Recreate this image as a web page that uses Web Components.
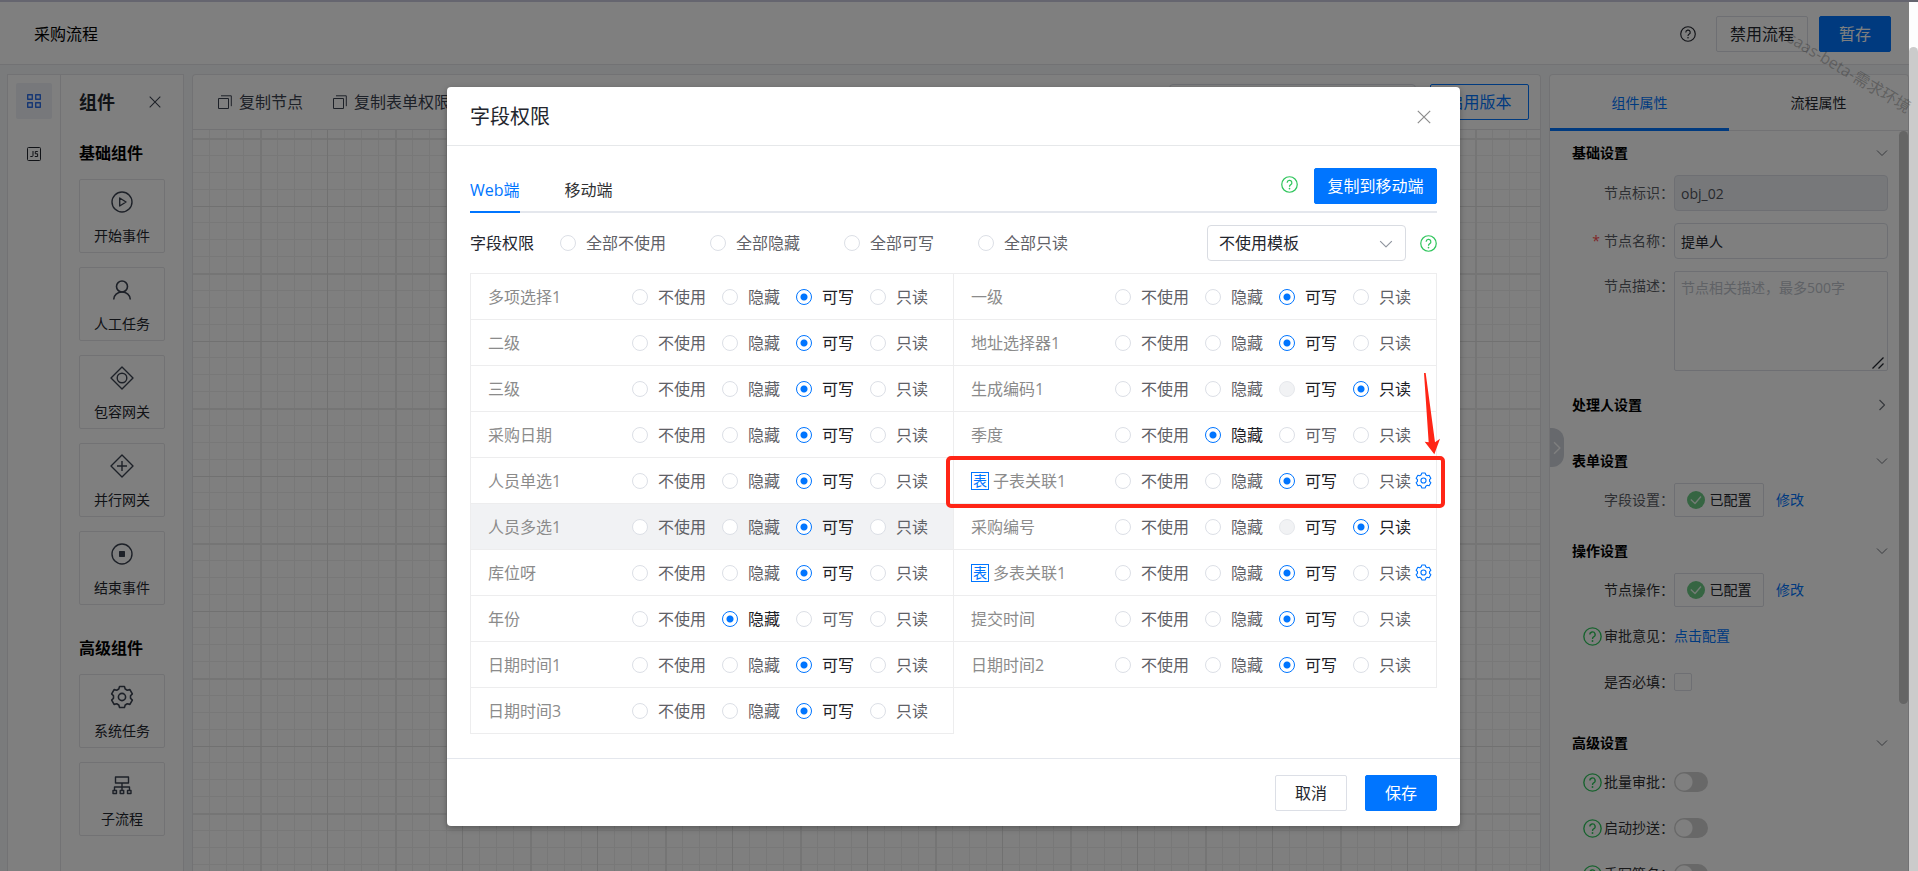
<!DOCTYPE html>
<html lang="zh-CN">
<head>
<meta charset="utf-8">
<meta name="viewport" content="width=device-width, initial-scale=1">
<title>采购流程</title>
<style>
  html, body { height: 100%; }
  body {
    margin: 0;
    overflow: hidden;
    font-family: "Open Sans", "Noto Sans CJK SC", sans-serif;
    font-size: 16px;
    line-height: 24px;
    color: #23262e;
    --blue: #0075ff;
    --line: #e4e5e8;
    --green: #2fc55c;
  }
</style>
</head>
<body>
<flow-app></flow-app>
<script>
const define = (name, html, setup) => {
  const template = document.createElement('template');
  template.innerHTML = '<style>*{box-sizing:border-box}button,input,select,textarea{font:inherit;color:inherit;margin:0}</style>' + html;
  customElements.define(name, class extends HTMLElement {
    constructor() {
      super();
      this.attachShadow({ mode: 'open' }).append(template.content.cloneNode(true));
    }
    connectedCallback() {
      if (setup && !this.ready) { this.ready = true; setup(this, this.shadowRoot); }
    }
  });
};

/* Six-toothed gear outline, first tooth pointing up */
const gearOutline = () => {
  const points = [];
  for (let k = 0; k < 6; k++) {
    for (const [turn, radius] of [[-22, 8.6], [-13, 10.8], [13, 10.8], [22, 8.6]]) {
      const a = (k * 60 - 90 + turn) * Math.PI / 180;
      points.push((12 + radius * Math.cos(a)).toFixed(2) + ' ' + (12 + radius * Math.sin(a)).toFixed(2));
    }
  }
  return `<path d="M${points.join('L')}z"/><circle cx="12" cy="12" r="3.6"/>`;
};

/* name: [viewBox size, stroke width, markup] */
const ICONS = {
  grid: [14, 1.4, '<path d="M.7.7h4.6v4.600H.7zM8.700.7h4.600v4.600H8.700zM.7 8.700h4.600v4.600H.7zM8.700 8.700h4.600v4.600H8.700z"/>'],
  js: [14, 1, '<rect x=".5" y=".5" width="13" height="13" rx="1"/><path d="M6 4v4.500q0 1-1 1H3.300M10.800 4.500H8.300v2.300h2.300v2.700H7.800"/>'],
  close: [14, 1.2, '<path d="M.8.8l12.400 12.400M13.200.8L.8 13.200"/>'],
  play: [24, 1.4, '<circle cx="12" cy="12" r="10"/><path d="M9.700 8v8l6.300-4z"/>'],
  user: [24, 1.6, '<circle cx="12" cy="8.500" r="5.500"/><path d="M3.700 21.500c0-4.500 3.800-7.500 8.300-7.500s8.300 3 8.300 7.500"/>'],
  inclusive: [24, 1.4, '<path d="M12 1l11 11-11 11L1 12z"/><circle cx="12" cy="12" r="4.800"/>'],
  parallel: [24, 1.4, '<path d="M12 1l11 11-11 11L1 12zM12 7v10M7 12h10"/>'],
  stop: [24, 1.4, '<circle cx="12" cy="12" r="10"/><rect x="9.700" y="9.700" width="4.600" height="4.600" fill="currentColor"/>'],
  gear: [24, 1.6, gearOutline()],
  tree: [24, 1.4, '<path d="M5.500 4h13v6h-13zM12 10v7M4.500 17v-3h15v3M3 17.500h3.500V20.500H3zM10.200 17.500h3.500V20.500h-3.500zM17.500 17.500H21V20.500h-3.500z"/>'],
  copy: [14, 1, '<path d="M.5 3.500h10v10H.5zM3 .8h10.300v10.400"/>'],
  help: [18, 1.3, '<circle cx="9" cy="9" r="8.200"/><path d="M6.500 7.200a2.500 2.500 0 1 1 3.600 2.200q-1.100.6-1.100 1.900"/><circle cx="9" cy="13.300" r=".9" fill="currentColor" stroke="none"/>'],
  down: [12, 1, '<path d="M1 3.500l5 5 5-5"/>'],
  right: [12, 1.2, '<path d="M3.500 1l5 5-5 5"/>'],
  ok: [18, 1.3, '<circle cx="9" cy="9" r="9" fill="#6ccb85" stroke="none"/><path d="M3.800 8.500l4.200 4 6-7" stroke="#e8f7ec"/>'],
  grip: [12, 1.3, '<path d="M.5 11.500l11-11M6.500 11.500l5-5"/>']
};
define('ui-icon', `<style>
  :host{display:block;width:14px;height:14px;flex:none}
  svg{display:block;width:100%;height:100%;overflow:visible}
</style>`, (el, root) => {
  const [size, width, body] = ICONS[el.getAttribute('name')];
  root.lastElementChild.insertAdjacentHTML('afterend',
    `<svg viewBox="0 0 ${size} ${size}" fill="none" stroke="currentColor" stroke-width="${width}" stroke-linejoin="round" aria-hidden="true">${body}</svg>`);
});

define('ui-button', `<style>
  :host{display:block;flex:none;height:36px}
  button{display:flex;align-items:center;justify-content:center;gap:5px;width:100%;height:100%;padding:0;border:1px solid #dcdfe6;border-radius:2px;background:transparent;white-space:nowrap;cursor:pointer}
  :host([kind=primary]) button{background:var(--blue);border-color:var(--blue);color:#fff}
  :host([kind=outline]) button{border-color:var(--blue);color:var(--blue)}
</style><button type="button"><slot></slot></button>`);

/* Top bar */
define('app-header', `<style>
  :host{display:flex;align-items:center;height:63px;padding:2px 18px 0 34px;background:#fff;border-bottom:1px solid var(--line);box-sizing:border-box}
  h1{flex:1;margin:0;font-size:16px;font-weight:400;color:#000}
  ui-icon{width:16px;height:16px;margin-right:20px}
  .disable{width:92px;margin-right:11px}
  .save{width:72px}
</style>
<h1>采购流程</h1><ui-icon name="help"></ui-icon>
<ui-button class="disable">禁用流程</ui-button><ui-button class="save" kind="primary">暂存</ui-button>`);

/* Narrow icon bar */
define('icon-rail', `<style>
  :host{display:flex;flex-direction:column;align-items:center;gap:17px;width:54px;padding-top:8px;background:#fff;border:1px solid var(--line);border-bottom:0;box-sizing:border-box;flex:none}
  button{display:grid;place-items:center;width:36px;height:36px;padding:0;border:0;border-radius:2px;background:none}
  .on{background:#eef1f6;color:#2d6fe8}
</style>
<button class="on" type="button" aria-label="组件"><ui-icon name="grid"></ui-icon></button>
<button type="button" aria-label="脚本"><ui-icon name="js"></ui-icon></button>`);

/* Palette of nodes that can be dropped on the canvas */
define('palette-item', `<style>
  :host{display:flex;flex-direction:column;align-items:center;gap:12px;height:74px;padding-top:10px;border:1px solid var(--line);border-radius:2px;box-sizing:border-box;font-size:14px;line-height:20px}
  ui-icon{width:24px;height:24px;color:#3b4250}
</style><slot></slot>`, (el, root) => {
  const icon = document.createElement('ui-icon');
  icon.setAttribute('name', el.getAttribute('icon'));
  root.insertBefore(icon, root.lastElementChild);
});
define('node-palette', `<style>
  :host{display:block;width:123px;padding:12px 18px 0;background:#fff;border:1px solid var(--line);border-width:1px 1px 0 0;box-sizing:border-box;flex:none}
  header{display:flex;align-items:center;justify-content:space-between;padding-right:4px;height:30px}
  h2,h3{margin:0;font-size:18px;line-height:30px;font-weight:700}
  button{display:grid;padding:0;border:0;background:none;color:#3b4250}
  button ui-icon{width:12px;height:12px}
  h3{font-size:16px;line-height:24px;font-weight:600;color:#000}
  section{display:flex;flex-direction:column;gap:14px;padding-top:24px}
  section+section{padding-top:31px}
</style>
<header><h2>组件</h2><button type="button" aria-label="关闭"><ui-icon name="close"></ui-icon></button></header>
<section><h3>基础组件</h3>
  <palette-item icon="play">开始事件</palette-item>
  <palette-item icon="user">人工任务</palette-item>
  <palette-item icon="inclusive">包容网关</palette-item>
  <palette-item icon="parallel">并行网关</palette-item>
  <palette-item icon="stop">结束事件</palette-item>
</section>
<section><h3>高级组件</h3>
  <palette-item icon="gear">系统任务</palette-item>
  <palette-item icon="tree">子流程</palette-item>
</section>`);

/* Canvas with its toolbar and grid paper */
define('flow-canvas', `<style>
  :host{display:flex;flex-direction:column;flex:1;min-width:0;background:#fff;border:1px solid var(--line);border-bottom:0;border-radius:4px 4px 0 0;box-sizing:border-box}
  header{display:flex;align-items:center;height:55px;padding:0 11px 0 25px;border-bottom:1px solid var(--line)}
  .tool{display:flex;align-items:center;gap:7px;padding:0;margin-right:30px;border:0;background:none;color:#3b4250}
  select{appearance:none;width:247px;height:36px;margin:0 14px 0 auto;border:1px solid #dcdfe6;border-radius:4px;background:none}
  ui-button{width:99px}
  svg{flex:1;width:100%;min-height:0}
</style>
<header>
  <button class="tool" type="button"><ui-icon name="copy"></ui-icon>复制节点</button>
  <button class="tool" type="button"><ui-icon name="copy"></ui-icon>复制表单权限</button>
  <select aria-label="版本"></select>
  <ui-button kind="outline">启用版本</ui-button>
</header>
<svg aria-hidden="true">
  <defs><pattern id="grid" x="67" y="8" width="135" height="135" patternUnits="userSpaceOnUse">
    <path d="M17.500 0v135M34.500 0v135M51.500 0v135M84.500 0v135M101.500 0v135M118.500 0v135M0 17.500h135M0 34.500h135M0 51.500h135M0 84.500h135M0 101.500h135M0 118.500h135" stroke="#f0f0f0"/>
    <path d="M1 0v135M0 1h135" stroke="#eaeaea" stroke-width="2"/>
    <path d="M67.500 0v135M0 68.500h135" stroke="#e2e2e2"/>
  </pattern></defs>
  <rect width="100%" height="100%" fill="url(#grid)"/>
</svg>`);

/* Right-hand property panel */
define('prop-section', `<style>
  :host{display:block;padding-bottom:12px}
  header{display:flex;align-items:center;justify-content:space-between;height:44px}
  h3{margin:0;font-size:14px;font-weight:700;color:#000}
  ui-icon{width:12px;height:12px;color:#70747c}
  div{display:flex;flex-direction:column;gap:12px}
</style><header><h3></h3></header><div><slot></slot></div>`, (el, root) => {
  root.querySelector('h3').textContent = el.getAttribute('heading');
  const icon = document.createElement('ui-icon');
  icon.setAttribute('name', el.hasAttribute('closed') ? 'right' : 'down');
  root.querySelector('header').append(icon);
});
define('prop-row', `<style>
  :host{display:grid;grid-template-columns:32px 70px 1fr;align-items:center;min-height:34px}
  .mark{display:flex;justify-content:flex-end;padding-right:2px}
  .mark ui-icon{width:19px;height:19px;color:var(--green)}
  .mark b{color:#ff4d4f;font-weight:400;padding-right:2px}
  .field{display:flex;align-items:center;gap:12px;position:relative}
  :host([top]){align-items:start}
  :host([top]) .label,:host([top]) .mark{padding-top:4px}
</style><div class="mark"></div><div class="label"><slot name="label"></slot></div><div class="field"><slot></slot></div>`, (el, root) => {
  const mark = root.querySelector('.mark');
  if (el.hasAttribute('required')) mark.innerHTML = '<b>*</b>';
  if (el.hasAttribute('help')) mark.innerHTML = '<ui-icon name="help"></ui-icon>';
});
define('property-panel', `<style>
  :host{display:block;position:relative;width:360px;background:#fff;border:1px solid var(--line);border-bottom:0;border-radius:4px 4px 0 0;box-sizing:border-box;flex:none;font-size:14px;line-height:22px}
  nav{display:flex;height:56px;border-bottom:1px solid var(--line)}
  nav button{flex:1;height:56px;padding:3px 0 0;border:0;border-bottom:3px solid transparent;background:none}
  nav .on{color:var(--blue);border-color:var(--blue)}
  .body{padding:0 20px 0 22px}
  .tail{padding-bottom:22px}
  label,.label{color:#5b5e66;white-space:nowrap}
  .dark{color:#303133}
  input[type=text],textarea{display:block;width:100%;height:36px;padding:0 6px;border:1px solid #dcdfe6;border-radius:4px;background:#fff}
  input:disabled{background:#eff1f5;color:#50545c}
  textarea{height:100px;padding:5px 6px;border-radius:2px;resize:none}
  textarea::placeholder{color:#c0c4cc;opacity:1}
  .grip{position:absolute;right:4px;bottom:2px;width:12px;height:12px}
  ui-button{width:90px;height:34px}
  ui-button ui-icon{width:18px;height:18px}
  a{color:var(--blue);text-decoration:none}
  input[type=checkbox]{appearance:none;width:18px;height:18px;border:1px solid #dcdfe6;border-radius:2px}
  input[role=switch]{width:34px;height:20px;border:0;border-radius:10px;background:radial-gradient(circle at 10px 10px,#fff 8px,#d0d0d0 9px)}
  .handle{position:absolute;left:0;top:353px;display:grid;place-items:center;width:14px;height:39px;padding:0;border:0;border-radius:0 12px 12px 0;background:#cfd2da;color:#fff}
  .handle ui-icon{width:14px;height:14px}
  .bar{position:absolute;right:0;top:56px;width:9px;height:573px;border-radius:5px;background:#cacaca}
</style>
<nav role="tablist"><button class="on" type="button" role="tab">组件属性</button><button type="button" role="tab">流程属性</button></nav>
<div class="body">
  <prop-section heading="基础设置">
    <prop-row><label slot="label" for="key">节点标识：</label><input id="key" type="text" value="obj_02" disabled></prop-row>
    <prop-row required><label slot="label" for="name">节点名称：</label><input id="name" type="text" value="提单人"></prop-row>
    <prop-row top><label slot="label" for="note">节点描述：</label><textarea id="note" placeholder="节点相关描述，最多500字"></textarea><ui-icon class="grip" name="grip"></ui-icon></prop-row>
  </prop-section>
  <prop-section heading="处理人设置" closed></prop-section>
  <prop-section heading="表单设置">
    <prop-row><span class="label" slot="label">字段设置：</span><ui-button><ui-icon name="ok"></ui-icon>已配置</ui-button><a href="#fields">修改</a></prop-row>
  </prop-section>
  <prop-section class="tail" heading="操作设置">
    <prop-row><span class="label dark" slot="label">节点操作：</span><ui-button><ui-icon name="ok"></ui-icon>已配置</ui-button><a href="#actions">修改</a></prop-row>
    <prop-row help><span class="label dark" slot="label">审批意见：</span><a href="#comment">点击配置</a></prop-row>
    <prop-row><label class="dark" slot="label" for="must">是否必填：</label><input id="must" type="checkbox"></prop-row>
  </prop-section>
  <prop-section heading="高级设置">
    <prop-row help><label class="dark" slot="label" for="batch">批量审批：</label><input id="batch" type="checkbox" role="switch"></prop-row>
    <prop-row help><label class="dark" slot="label" for="cc">启动抄送：</label><input id="cc" type="checkbox" role="switch"></prop-row>
    <prop-row help><label class="dark" slot="label" for="sign">手写签名：</label><input id="sign" type="checkbox" role="switch"></prop-row>
  </prop-section>
</div>
<button class="handle" type="button" aria-label="收起"><ui-icon name="right"></ui-icon></button>
<div class="bar"></div>`);

/* Radio with its caption, shared by the dialog's two kinds of row */
const RADIO_CSS = `
  label{display:flex;align-items:center;gap:10px;color:#5f6167;white-space:nowrap}
  input{appearance:none;flex:none;width:16px;height:16px;border:1px solid #dcdfe6;border-radius:50%;background:#fff}
  input:checked{border-color:var(--blue);background:radial-gradient(circle,var(--blue) 3px,#fff 4px)}
  input:disabled{background:#f1f2f4;border-color:#e6e8ec}
  input:checked+span,input:disabled+span{color:#1d2026}`;

/* One field of the form: its name and its four permission levels */
define('permission-row', `<style>${RADIO_CSS}
  :host{display:grid;grid-template-columns:144px auto 1fr;align-items:center;height:46px;padding-left:17px;border:1px solid #ededee;border-width:0 1px 1px 0;box-sizing:border-box}
  :host([table]){position:relative;z-index:1}
  :host([active]){background:#f1f2f4}
  .name{display:flex;align-items:center;gap:4px;color:#8b8b8b;white-space:nowrap}
  .badge{display:grid;place-items:center;width:18px;height:18px;border:1px solid var(--blue);font-size:14px;line-height:16px;color:var(--blue)}
  .levels{display:flex;gap:16px}
  .set{display:grid;width:17px;height:17px;margin-left:4px;padding:0;border:0;background:none;color:var(--blue)}
  .set ui-icon{width:17px;height:17px}
</style><div class="name"></div><div class="levels" role="radiogroup"></div><slot></slot>`, (el, root) => {
  const name = root.querySelector('.name');
  name.textContent = el.getAttribute('field');
  const value = +el.getAttribute('value');
  root.querySelector('.levels').setAttribute('aria-label', el.getAttribute('field'));
  root.querySelector('.levels').innerHTML = ['不使用', '隐藏', '可写', '只读'].map((text, i) =>
    `<label><input type="radio" name="level"${i === value ? ' checked' : ''}${i === 2 && el.hasAttribute('locked') ? ' disabled' : ''}><span>${text}</span></label>`).join('');
  if (el.hasAttribute('table')) {
    name.insertAdjacentHTML('afterbegin', '<span class="badge">表</span>');
    root.querySelector('.levels').insertAdjacentHTML('afterend', '<button class="set" type="button" aria-label="设置"><ui-icon name="gear"></ui-icon></button>');
  }
});

/* Hand-drawn red frame and arrow laid over a row */
define('callout-mark', `<style>
  :host{position:absolute;inset:-2px -9px -5px -8px;border:4px solid #ff2516;border-radius:5px;pointer-events:none}
  svg{position:absolute;right:1px;bottom:100%;width:16px;height:82px;margin-bottom:5px;overflow:visible}
</style><svg viewBox="0 0 48 246" aria-hidden="true"><path d="M0 0h5L33 208 48 197 31 244 2 206 14 208z" fill="#ff2516"/></svg>`);

define('permission-dialog', `<style>${RADIO_CSS}
  :host{display:flex;flex-direction:column;width:1013px;max-width:100%;background:#fff;border-radius:4px;box-shadow:0 2px 6px rgba(0,0,0,.3);box-sizing:border-box}
  header{display:flex;align-items:center;justify-content:space-between;height:59px;padding:2px 29px 0 23px;border-bottom:1px solid #e6e8ea}
  h2{margin:0;font-size:20px;font-weight:400}
  .x{display:grid;padding:0;border:0;background:none;color:#8c8c8c}
  .body{padding:0 23px 24px}
  nav{display:flex;align-items:flex-end;gap:45px;height:67px;border-bottom:2px solid #e4e7ed}
  nav .tab{height:38px;margin-bottom:-2px;padding:0 0 6px;border:0;border-bottom:2px solid transparent;background:none;color:#303133}
  nav .on{color:var(--blue);border-color:var(--blue)}
  .help{width:17px;height:17px;color:var(--green)}
  nav .help{margin:0 -29px 18px auto}
  nav ui-button{width:123px;margin-bottom:7px}
  .all{display:flex;align-items:center;height:60px}
  .all b{margin-right:26px;font-weight:400}
  .all label{margin-right:44px}
  .pick{position:relative;margin:0 14px 0 auto;width:199px}
  .pick select{appearance:none;display:block;width:100%;height:36px;padding:0 11px;border:1px solid #d9dce2;border-radius:4px;background:#fff}
  .pick ui-icon{position:absolute;right:13px;top:12px;width:14px;height:14px;color:#8f949e;pointer-events:none}
  .fields{display:grid;grid-template-columns:1fr 1fr;border:1px solid #ededee;border-width:1px 0 0 1px}
  footer{display:flex;align-items:center;justify-content:flex-end;gap:18px;height:68px;padding:0 23px;border-top:1px solid #e4e7ed}
  footer ui-button{width:72px}
</style>
<header><h2 id="title">字段权限</h2><button class="x" type="button" aria-label="关闭"><ui-icon name="close"></ui-icon></button></header>
<div class="body">
  <nav role="tablist"><button class="tab on" type="button" role="tab">Web端</button><button class="tab" type="button" role="tab">移动端</button><ui-icon class="help" name="help"></ui-icon><ui-button kind="primary">复制到移动端</ui-button></nav>
  <div class="all"><b>字段权限</b>
    <label><input type="radio" name="all"><span>全部不使用</span></label>
    <label><input type="radio" name="all"><span>全部隐藏</span></label>
    <label><input type="radio" name="all"><span>全部可写</span></label>
    <label><input type="radio" name="all"><span>全部只读</span></label>
    <div class="pick"><select aria-label="模板"><option>不使用模板</option></select><ui-icon name="down"></ui-icon></div>
    <ui-icon class="help" name="help"></ui-icon>
  </div>
  <div class="fields">
    <permission-row field="多项选择1" value="2"></permission-row>
    <permission-row field="一级" value="2"></permission-row>
    <permission-row field="二级" value="2"></permission-row>
    <permission-row field="地址选择器1" value="2"></permission-row>
    <permission-row field="三级" value="2"></permission-row>
    <permission-row field="生成编码1" value="3" locked></permission-row>
    <permission-row field="采购日期" value="2"></permission-row>
    <permission-row field="季度" value="1"></permission-row>
    <permission-row field="人员单选1" value="2"></permission-row>
    <permission-row field="子表关联1" value="2" table><callout-mark></callout-mark></permission-row>
    <permission-row field="人员多选1" value="2" active></permission-row>
    <permission-row field="采购编号" value="3" locked></permission-row>
    <permission-row field="库位呀" value="2"></permission-row>
    <permission-row field="多表关联1" value="2" table></permission-row>
    <permission-row field="年份" value="1"></permission-row>
    <permission-row field="提交时间" value="2"></permission-row>
    <permission-row field="日期时间1" value="2"></permission-row>
    <permission-row field="日期时间2" value="2"></permission-row>
    <permission-row field="日期时间3" value="2"></permission-row>
  </div>
</div>
<footer><ui-button>取消</ui-button><ui-button kind="primary">保存</ui-button></footer>`);

define('flow-app', `<style>
  :host{display:grid;grid-template-columns:minmax(0,1fr) 9px;position:relative;height:100vh;border-top:2px solid #65656f;box-sizing:border-box}
  .app{display:flex;flex-direction:column;position:relative;min-height:0;overflow:hidden;background:#f5f6f8}
  main{display:flex;flex:1;min-height:0;padding:9px 0 0 7px}
  flow-canvas{margin:0 8px}
  .mask{position:absolute;inset:0;display:flex;align-items:flex-start;justify-content:center;padding:85px 2px 0 0;background:rgba(0,0,0,.5)}
  .stamp{position:absolute;right:-2px;top:58px;color:rgba(40,40,40,.36);white-space:nowrap;transform:rotate(31deg);pointer-events:none}
  .scroll{padding-top:45px;background:#fdfdfd}
  .scroll div{height:100%;border-radius:5px 5px 0 0;background:#cbcbcb}
</style>
<div class="app">
  <app-header></app-header>
  <main><icon-rail></icon-rail><node-palette></node-palette><flow-canvas></flow-canvas><property-panel></property-panel></main>
  <div class="mask"><permission-dialog role="dialog" aria-label="字段权限"></permission-dialog></div>
</div>
<div class="scroll"><div></div></div>
<div class="stamp">saas-beta-需求环境</div>`);
</script>
</body>
</html>
